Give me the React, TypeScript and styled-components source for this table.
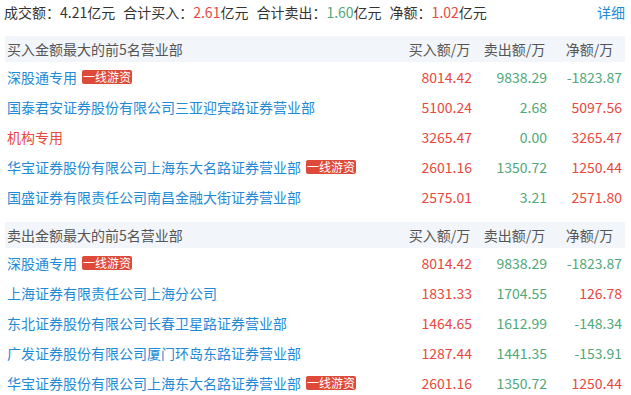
import React, { FC } from 'react';
import styled, { createGlobalStyle } from 'styled-components';

const GlobalStyle = createGlobalStyle`
  body {
    margin: 0;
    background: #fff;
    font-family: "Noto Sans CJK SC", "Noto Sans", sans-serif;
    font-size: 14px;
    color: #333;
  }
`;

const RED = '#e8483d';
const GREEN = '#4fa87a';
const BLUE = '#1f8ad6';

const Page = styled.div`
  width: 631px;
  padding: 0 6px 0 4px;
  box-sizing: border-box;
`;

const Summary = styled.div`
  display: flex;
  align-items: center;
  height: 24px;
  margin-bottom: 12px;
  white-space: nowrap;
`;

const SummaryItem = styled.span`
  margin-right: 8px;
`;

const Num = styled.span<{ tone: 'red' | 'green' }>`
  color: ${({ tone }) => (tone === 'red' ? RED : GREEN)};
`;

const Detail = styled.a`
  margin-left: auto;
  color: ${BLUE};
  text-decoration: none;
`;

const Table = styled.div`
  margin-left: 1px;
  width: 620px;
`;

const Section = styled.div`
  & + & {
    margin-top: 10px;
  }
`;

const HeadRow = styled.div`
  display: grid;
  grid-template-columns: 1fr 75px 75px 75px;
  align-items: center;
  height: 26px;
  background: #f2f6fa;
  color: #555;
`;

const HeadTitle = styled.div`
  padding-left: 2px;
`;

const HeadCol = styled.div`
  text-align: center;
  padding-left: 4px;
`;

const Row = styled.div`
  display: grid;
  grid-template-columns: 1fr 75px 75px 75px;
  align-items: center;
  height: 30px;
  white-space: nowrap;
`;

const Name = styled.div<{ special?: boolean }>`
  padding-left: 2px;
  display: flex;
  align-items: center;
  color: ${({ special }) => (special ? RED : BLUE)};
`;

const Badge = styled.span`
  margin-left: 5px;
  padding: 0 1px;
  height: 14px;
  line-height: 14px;
  font-size: 12px;
  color: #fff;
  background: #de4a39;
  border-radius: 2px;
`;

const Cell = styled.div<{ tone: 'red' | 'green' }>`
  text-align: right;
  padding-right: 3px;
  color: ${({ tone }) => (tone === 'red' ? RED : GREEN)};
`;

type Item = {
  name: string;
  badge?: boolean;
  special?: boolean;
  buy: string;
  sell: string;
  net: string;
};

const buyList: Item[] = [
  { name: '深股通专用', badge: true, buy: '8014.42', sell: '9838.29', net: '-1823.87' },
  { name: '国泰君安证券股份有限公司三亚迎宾路证券营业部', buy: '5100.24', sell: '2.68', net: '5097.56' },
  { name: '机构专用', special: true, buy: '3265.47', sell: '0.00', net: '3265.47' },
  { name: '华宝证券股份有限公司上海东大名路证券营业部', badge: true, buy: '2601.16', sell: '1350.72', net: '1250.44' },
  { name: '国盛证券有限责任公司南昌金融大街证券营业部', buy: '2575.01', sell: '3.21', net: '2571.80' },
];

const sellList: Item[] = [
  { name: '深股通专用', badge: true, buy: '8014.42', sell: '9838.29', net: '-1823.87' },
  { name: '上海证券有限责任公司上海分公司', buy: '1831.33', sell: '1704.55', net: '126.78' },
  { name: '东北证券股份有限公司长春卫星路证券营业部', buy: '1464.65', sell: '1612.99', net: '-148.34' },
  { name: '广发证券股份有限公司厦门环岛东路证券营业部', buy: '1287.44', sell: '1441.35', net: '-153.91' },
  { name: '华宝证券股份有限公司上海东大名路证券营业部', badge: true, buy: '2601.16', sell: '1350.72', net: '1250.44' },
];

const TableSection: FC<{ title: string; items: Item[] }> = ({ title, items }) => (
  <Section>
    <HeadRow>
      <HeadTitle>{title}</HeadTitle>
      <HeadCol>买入额/万</HeadCol>
      <HeadCol>卖出额/万</HeadCol>
      <HeadCol>净额/万</HeadCol>
    </HeadRow>
    {items.map((it, i) => (
      <Row key={i}>
        <Name special={it.special}>
          {it.name}
          {it.badge && <Badge>一线游资</Badge>}
        </Name>
        <Cell tone="red">{it.buy}</Cell>
        <Cell tone="green">{it.sell}</Cell>
        <Cell tone={it.net.startsWith('-') ? 'green' : 'red'}>{it.net}</Cell>
      </Row>
    ))}
  </Section>
);

const App: FC = () => (
  <>
    <GlobalStyle />
    <Page>
      <Summary>
        <SummaryItem>成交额：4.21亿元</SummaryItem>
        <SummaryItem>
          合计买入：<Num tone="red">2.61</Num>亿元
        </SummaryItem>
        <SummaryItem>
          合计卖出：<Num tone="green">1.60</Num>亿元
        </SummaryItem>
        <SummaryItem>
          净额：<Num tone="red">1.02</Num>亿元
        </SummaryItem>
        <Detail href="#">详细</Detail>
      </Summary>
      <Table>
        <TableSection title="买入金额最大的前5名营业部" items={buyList} />
        <TableSection title="卖出金额最大的前5名营业部" items={sellList} />
      </Table>
    </Page>
  </>
);

export default App;
